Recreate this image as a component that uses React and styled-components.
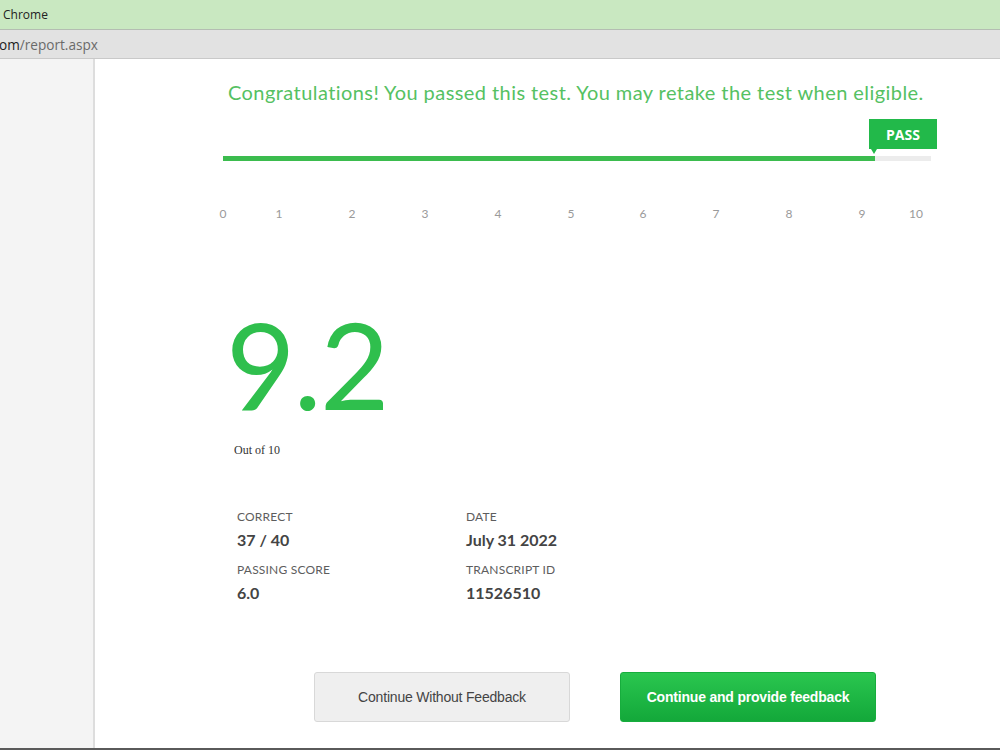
import React from "react";
import styled, { createGlobalStyle } from "styled-components";

const GlobalStyle = createGlobalStyle`
  html, body {
    margin: 0;
    padding: 0;
    background: #ffffff;
  }
  * {
    box-sizing: border-box;
  }
`;

const Page = styled.div`
  width: 1000px;
  height: 750px;
  display: flex;
  flex-direction: column;
  overflow: hidden;
  font-family: "Lato", "Liberation Sans", sans-serif;
`;

const TitleBar = styled.div`
  height: 30px;
  flex-shrink: 0;
  background: #c9e8c1;
  border-bottom: 1px solid #b4bdb2;
  display: flex;
  align-items: center;
  padding-left: 3px;
  font-family: "Open Sans", "Liberation Sans", sans-serif;
  font-size: 12px;
  color: #222;
`;

const AddressBar = styled.div`
  height: 29px;
  flex-shrink: 0;
  background: #e2e2e2;
  border-bottom: 1px solid #c9c9c9;
  display: flex;
  align-items: center;
  font-family: "Open Sans", "Liberation Sans", sans-serif;
  font-size: 13.6px;
  color: #6a6a6a;
  margin-left: -1px;

  b {
    font-weight: 400;
    color: #1e1e1e;
  }
`;

const Body = styled.div`
  flex: 1;
  display: flex;
  border-bottom: 2px solid #5a5a5a;
`;

const Sidebar = styled.div`
  width: 95px;
  flex-shrink: 0;
  background: #f4f4f4;
  border-right: 2px solid #dddddd;
`;

const Main = styled.div`
  flex: 1;
  padding: 21px 0 0 128px;
  display: flex;
  flex-direction: column;
`;

const Congrats = styled.div`
  font-size: 20px;
  letter-spacing: 0.43px;
  color: #55c162;
  padding-left: 5px;
  line-height: 24px;
  white-space: nowrap;
`;

const Progress = styled.div`
  position: relative;
  width: 708px;
  margin-top: 15px;
  height: 42px;
`;

const Track = styled.div`
  position: absolute;
  left: 0;
  right: 0;
  bottom: 0;
  height: 5px;
  background: #ececec;
  display: flex;
`;

const Fill = styled.div`
  height: 5px;
  background: #3bbc4e;
`;

const Badge = styled.div`
  position: absolute;
  top: 0;
  width: 68px;
  height: 30px;
  background: #22b94a;
  color: #ffffff;
  font-family: "Open Sans", "Liberation Sans", sans-serif;
  font-weight: 700;
  font-size: 14px;
  display: flex;
  align-items: center;
  justify-content: center;

  &::after {
    content: "";
    position: absolute;
    left: 2px;
    bottom: -5px;
    border-left: 3px solid transparent;
    border-right: 3px solid transparent;
    border-top: 5px solid #22b94a;
  }
`;

const Axis = styled.div`
  position: relative;
  width: 708px;
  height: 14px;
  margin-top: 45px;
`;

const Tick = styled.span`
  position: absolute;
  top: 0;
  transform: translateX(-50%);
  font-size: 12px;
  color: #9a9a9a;
  font-family: "Lato", "Liberation Sans", sans-serif;
`;

const Score = styled.div`
  margin-top: 94px;
  padding-left: 3px;
  font-size: 120px;
  line-height: 100px;
  color: #2fbf4d;
  font-family: "Lato", "Liberation Sans", sans-serif;
  font-weight: 400;
  letter-spacing: -2px;
`;

const OutOf = styled.div`
  margin-top: 29px;
  padding-left: 11px;
  font-family: "Liberation Serif", serif;
  font-size: 12px;
  color: #333;
`;

const Stats = styled.div`
  margin-top: 52px;
  padding-left: 14px;
  display: grid;
  grid-template-columns: 229px 229px;
  row-gap: 13px;
`;

const Stat = styled.div`
  display: flex;
  flex-direction: column;
  gap: 6px;
`;

const Label = styled.div`
  font-size: 12px;
  letter-spacing: 0.2px;
  color: #5d5d5d;
  text-transform: uppercase;
  line-height: 14px;
`;

const Value = styled.div`
  font-size: 16px;
  font-weight: 700;
  color: #444;
  line-height: 20px;
`;

const Actions = styled.div`
  margin-top: 69px;
  padding-left: 91px;
  display: flex;
  gap: 50px;
`;

const Button = styled.button`
  width: 256px;
  height: 50px;
  border-radius: 3px;
  font-family: "Liberation Sans", Arial, sans-serif;
  font-size: 14px;
  letter-spacing: -0.2px;
  cursor: pointer;
  border: 1px solid ${(p) => (p.$primary ? "#17ad3d" : "#d8d8d8")};
  background: ${(p) =>
    p.$primary ? "linear-gradient(#2ac64f, #13a83a)" : "#efefef"};
  color: ${(p) => (p.$primary ? "#ffffff" : "#444444")};
  font-weight: ${(p) => (p.$primary ? 700 : 400)};
`;

const ticks = [
  { v: "0", x: 0 },
  { v: "1", x: 56 },
  { v: "2", x: 129 },
  { v: "3", x: 202 },
  { v: "4", x: 275 },
  { v: "5", x: 348 },
  { v: "6", x: 420 },
  { v: "7", x: 493 },
  { v: "8", x: 566 },
  { v: "9", x: 639 },
  { v: "10", x: 693 },
];

const stats = [
  ["Correct", "37 / 40"],
  ["Date", "July 31 2022"],
  ["Passing Score", "6.0"],
  ["Transcript ID", "11526510"],
];

export default function App() {
  const fillWidth = 652;
  return (
    <>
      <GlobalStyle />
      <Page>
        <TitleBar>Chrome</TitleBar>
        <AddressBar>
          <span>
            <b>om</b>/report.aspx
          </span>
        </AddressBar>
        <Body>
          <Sidebar />
          <Main>
            <Congrats>
              Congratulations! You passed this test. You may retake the test
              when eligible.
            </Congrats>
            <Progress>
              <Track>
                <Fill style={{ width: fillWidth }} />
              </Track>
              <Badge style={{ left: fillWidth - 6 }}>PASS</Badge>
            </Progress>
            <Axis>
              {ticks.map((t) => (
                <Tick key={t.v} style={{ left: t.x }}>
                  {t.v}
                </Tick>
              ))}
            </Axis>
            <Score>9.2</Score>
            <OutOf>Out of 10</OutOf>
            <Stats>
              {stats.map(([label, value]) => (
                <Stat key={label}>
                  <Label>{label}</Label>
                  <Value>{value}</Value>
                </Stat>
              ))}
            </Stats>
            <Actions>
              <Button>Continue Without Feedback</Button>
              <Button $primary>Continue and provide feedback</Button>
            </Actions>
          </Main>
        </Body>
      </Page>
    </>
  );
}
